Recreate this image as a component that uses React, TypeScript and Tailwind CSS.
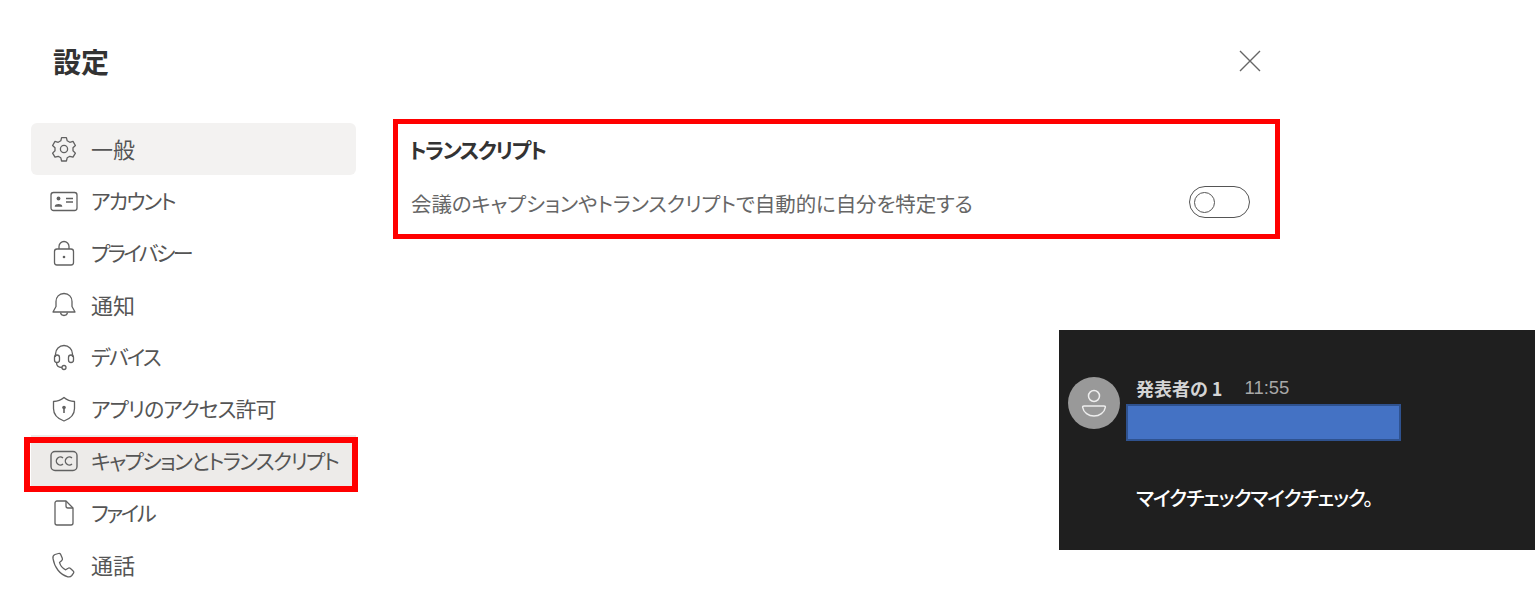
const FONT = "font-['Noto_Sans_CJK_JP','Noto_Sans_CJK_SC',sans-serif] [font-feature-settings:'palt']";

function Gear() {
  return (
    <svg width="28" height="28" viewBox="0 0 28 28" fill="none" stroke="#616161" strokeWidth="1.3">
      <path d="M11.6 2.6 h4.8 l0.8 3.2 2.6 1.5 3.2-0.9 2.4 4.1-2.4 2.3 v3 l2.4 2.3-2.4 4.1-3.2-0.9-2.6 1.5-0.8 3.2 h-4.8 l-0.8-3.2-2.6-1.5-3.2 0.9-2.4-4.1 2.4-2.3 v-3 l-2.4-2.3 2.4-4.1 3.2 0.9 2.6-1.5z" strokeLinejoin="round" />
      <circle cx="14" cy="14" r="3.6" />
    </svg>
  );
}

function IdCard() {
  return (
    <svg width="28" height="28" viewBox="0 0 28 28" fill="none" stroke="#616161" strokeWidth="1.3">
      <rect x="1" y="5.5" width="26" height="18" rx="2.5" />
      <circle cx="8.5" cy="11.5" r="1.9" fill="#616161" stroke="none" />
      <path d="M4.8 19 c0-2.8 7.4-2.8 7.4 0 v0.8 h-7.4z" fill="#616161" stroke="none" />
      <path d="M16 11.5 h7 M16 15 h7" />
    </svg>
  );
}

function Lock() {
  return (
    <svg width="28" height="28" viewBox="0 0 28 28" fill="none" stroke="#616161" strokeWidth="1.3">
      <rect x="4.5" y="10" width="19" height="16" rx="2.5" />
      <path d="M9 10 V7.5 a5 5 0 0 1 10 0 V10" />
      <circle cx="14" cy="18" r="1.3" fill="#616161" stroke="none" />
    </svg>
  );
}

function Bell() {
  return (
    <svg width="28" height="28" viewBox="0 0 28 28" fill="none" stroke="#616161" strokeWidth="1.3">
      <path d="M14 2.5 c-5 0-8 3.6-8 8 v5 l-3 5.5 h22 l-3-5.5 v-5 c0-4.4-3-8-8-8z" strokeLinejoin="round" />
      <path d="M10.5 21.5 c0.5 4 6.5 4 7 0" />
    </svg>
  );
}

function Headset() {
  return (
    <svg width="28" height="28" viewBox="0 0 28 28" fill="none" stroke="#616161" strokeWidth="1.3">
      <path d="M5.5 14 v-3 a8.500 8.500 0 0 1 17 0 v3" />
      <rect x="4.500" y="12" width="5" height="7.500" rx="2.500" />
      <rect x="18.500" y="12" width="5" height="7.500" rx="2.500" />
      <path d="M6.500 19.500 c0 3.500 2 5 5.500 5" />
      <circle cx="14" cy="24.500" r="2" />
    </svg>
  );
}

function Shield() {
  return (
    <svg width="28" height="28" viewBox="0 0 28 28" fill="none" stroke="#616161" strokeWidth="1.3">
      <path d="M14 2.5 c3 2.6 6.5 3.8 10.5 4 v7 c0 6-3.5 10-10.5 12.5 C7 23.500 3.500 19.500 3.500 13.500 v-7 c4-0.2 7.500-1.400 10.500-4z" strokeLinejoin="round" />
      <circle cx="14" cy="12.500" r="1.800" fill="#616161" stroke="none" />
      <path d="M14 13 v5" strokeWidth="1.600" />
    </svg>
  );
}

function Cc() {
  return (
    <svg width="28" height="28" viewBox="0 0 28 28" fill="none" stroke="#616161" strokeWidth="1.4">
      <rect x="1" y="4.500" width="26" height="19" rx="4" />
      <path d="M13 11 a4 4 0 1 0 0 6 M22 11 a4 4 0 1 0 0 6" />
    </svg>
  );
}

function FileIcon() {
  return (
    <svg width="28" height="28" viewBox="0 0 28 28" fill="none" stroke="#616161" strokeWidth="1.3">
      <path d="M5 4 a2 2 0 0 1 2-2 h9 l7 7 v15 a2 2 0 0 1-2 2 H7 a2 2 0 0 1-2-2z" strokeLinejoin="round" />
      <path d="M16 2 v5 a2 2 0 0 0 2 2 h5" />
    </svg>
  );
}

function Phone() {
  return (
    <svg width="28" height="28" viewBox="0 0 28 28" fill="none" stroke="#616161" strokeWidth="1.3">
      <path d="M5 3.500 l3.500-1 c1-0.300 1.800 0.200 2.200 1 l1.600 3.800 c0.300 0.800 0.100 1.600-0.500 2.100 l-2.300 2 c0.800 3 3 6 6.200 7.400 l2.400-1.600 c0.700-0.500 1.500-0.400 2.100 0.100 l3 2.700 c0.700 0.600 0.800 1.500 0.300 2.200 l-1.700 2.300 c-1 1.200-2.500 1.700-4 1.300 C10 23.800 4.500 16.500 3 7.500 c-0.300-1.700 0.500-3.400 2-4z" strokeLinejoin="round" />
    </svg>
  );
}

const items = [
  { label: "一般", icon: <Gear />, text: "mb-[2px] text-[22px]", active: true },
  { label: "アカウント", icon: <IdCard />, text: "text-[21px] tracking-[-1.8px]" },
  { label: "プライバシー", icon: <Lock />, text: "text-[21px] tracking-[-2.6px]" },
  { label: "通知", icon: <Bell />, text: "mb-[2px] text-[22px]" },
  { label: "デバイス", icon: <Headset />, text: "text-[21px] tracking-[-1.85px]" },
  { label: "アプリのアクセス許可", icon: <Shield />, text: "text-[21px] tracking-[-1px]" },
  { label: "キャプションとトランスクリプト", icon: <Cc />, text: "text-[21px] tracking-[-1.6px]", marked: true },
  { label: "ファイル", icon: <FileIcon />, text: "text-[21px] tracking-[-2.35px]" },
  { label: "通話", icon: <Phone />, text: "mb-[2px] text-[22px]" },
];

export default function App() {
  return (
    <div className={`h-[607px] w-[1535px] overflow-hidden bg-white ${FONT}`}>
      <div className="flex h-[123px] items-start justify-between pl-[53px] pr-[274px] pt-[40px]">
        <h1 className="text-[28px] leading-[42px] font-bold text-[#333]">設定</h1>
        <svg className="mt-[10px]" width="22" height="22" viewBox="0 0 22 22" fill="none" stroke="#666" strokeWidth="1.4">
          <path d="M1 1 L21 21 M21 1 L1 21" />
        </svg>
      </div>

      <div className="flex">
        <nav className="ml-[31px] w-[325px] shrink-0">
          {items.map((item) => (
            <div
              key={item.label}
              className={`relative flex h-[52px] items-center gap-[13px] pl-[19px] text-[#555] ${
                item.active ? "rounded-md bg-[#f3f2f1]" : ""
              } ${item.marked ? "bg-[#edebe9]" : ""}`}
            >
              {item.icon}
              <span className={`whitespace-nowrap ${item.text}`}>{item.label}</span>
              {item.marked && (
                <span className="absolute top-[2px] -left-[7px] h-[55px] w-[334px] border-[6px] border-[#ff0000]" />
              )}
            </div>
          ))}
        </nav>

        <div className="flex-1">
          <section className="-mt-[4px] ml-[37px] h-[120px] w-[887px] border-[5px] border-[#ff0000] pl-[11px] pr-[25px] pt-[9px]">
            <h2 className="text-[21px] leading-[32px] font-bold tracking-[-1.6px] text-[#333]">トランスクリプト</h2>
            <div className="mt-[21px] flex items-center justify-between">
              <span className="pl-[2px] text-[20.5px] leading-[30px] tracking-[-0.1px] text-[#666]">
                会議のキャプションやトランスクリプトで自動的に自分を特定する
              </span>
              <div className="mb-[2px] flex h-[32px] w-[61px] items-center rounded-full border-[1.5px] border-[#555] pl-[4px]">
                <div className="h-[21px] w-[21px] rounded-full border-[1.5px] border-[#555]" />
              </div>
            </div>
          </section>

          <section className="mt-[91px] ml-[703px] h-[220px] w-[476px] bg-[#1f1f1f] pl-[9px] pt-[47px]">
            <div className="flex">
              <div className="flex h-[52px] w-[52px] shrink-0 items-center justify-center rounded-full bg-[#999]">
                <svg width="26" height="28" viewBox="0 0 26 28" fill="none" stroke="#eee" strokeWidth="1.5">
                  <circle cx="13" cy="7" r="5.5" />
                  <path d="M3 17 h20 c1 0 1.500 0.500 1.300 1.500 C23.500 23.500 18.500 27 13 27 S2.500 23.500 1.700 18.500 C1.500 17.500 2 17 3 17z" strokeLinejoin="round" />
                </svg>
              </div>
              <div className="ml-[6px]">
                <div className="flex h-[27px] items-start pl-[10px] text-[18px] leading-[22px]">
                  <span className="font-bold text-[#d4d4d4]">発表者の 1</span>
                  <span className="ml-[22px] font-['Liberation_Sans',sans-serif] text-[18.5px] text-[#a8a8a8]">11:55</span>
                </div>
                <div className="h-[37px] w-[275px] border-2 border-[#2f528f] bg-[#4472c4]" />
                <p className="mt-[42px] pl-[10px] text-[20px] leading-[30px] font-medium tracking-[-1px] text-white">
                  マイクチェックマイクチェック。
                </p>
              </div>
            </div>
          </section>
        </div>
      </div>
    </div>
  );
}
